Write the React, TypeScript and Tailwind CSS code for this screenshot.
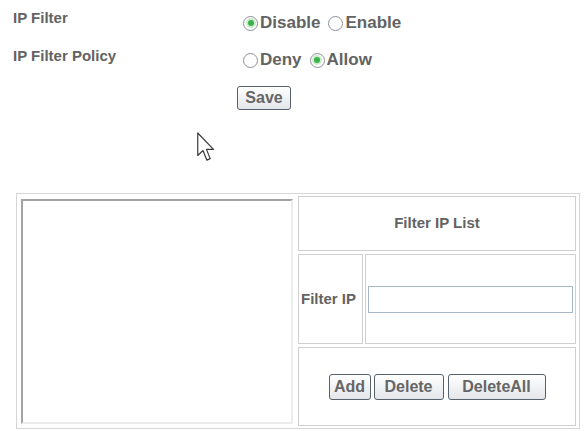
import React from 'react';

function Radio({ checked, label }: { checked?: boolean; label: string }) {
  return (
    <span className="flex items-center">
      <span className="shrink-0 w-[15px] h-[15px] rounded-full border-[1.5px] border-[#8b9097] bg-white flex items-center justify-center">
        {checked && <span className="w-[6px] h-[6px] rounded-full bg-[#3cb34a] ring-2 ring-[#cdeccd]" />}
      </span>
      <span className="ml-[2px] text-[17px] leading-[18px]">{label}</span>
    </span>
  );
}

function Btn({ label, w }: { label: string; w: string }) {
  return (
    <button
      className={`${w} h-[26px] border-[1.5px] border-[#56616c] rounded-[3px] bg-linear-to-b from-white to-[#e4e6ea] text-[16px] font-bold text-[#666] leading-none`}
    >
      {label}
    </button>
  );
}

export default function App() {
  return (
    <div className="relative w-[584px] h-[431px] bg-white font-['Liberation_Sans',Arial,sans-serif] font-bold text-[#636363] overflow-hidden">
      <div className="pl-[13px] pt-[10px]">
        <div className="flex h-[38px] items-start">
          <div className="w-[230px] text-[15px] leading-[16px]">IP Filter</div>
          <div className="flex gap-[8px] mt-[4px]">
            <Radio checked label="Disable" />
            <Radio label="Enable" />
          </div>
        </div>
        <div className="flex h-[30px] items-start">
          <div className="w-[230px] text-[15px] leading-[16px]">IP Filter Policy</div>
          <div className="flex gap-[8px] mt-[3px]">
            <Radio label="Deny" />
            <Radio checked label="Allow" />
          </div>
        </div>
        <div className="ml-[224px] mt-[8px]">
          <button className="w-[54px] h-[24px] border-[1.5px] border-[#56616c] rounded-[3px] bg-linear-to-b from-white to-[#e4e6ea] text-[16px] font-bold text-[#666] leading-none">
            Save
          </button>
        </div>
      </div>

      <div className="ml-[16px] mt-[83px] w-[564px] h-[236px] border border-[#d6d6d6] p-[2px] flex gap-[2px]">
        <div className="w-[277px] pl-[2px] pt-[3px]">
          <textarea className="w-[272px] h-[225px] resize-none border-2 border-t-[#a3a3a3] border-l-[#a3a3a3] border-r-[#ececec] border-b-[#ececec] bg-white outline-none" />
        </div>
        <div className="w-[278px] flex flex-col gap-[3px]">
          <div className="h-[55px] border border-[#d0d0d0] flex items-center justify-center text-[15px]">
            Filter IP List
          </div>
          <div className="h-[90px] flex gap-[2px]">
            <div className="w-[65px] border border-[#d0d0d0] flex items-center pl-[2px] text-[15px] whitespace-nowrap">
              Filter IP
            </div>
            <div className="flex-1 border border-[#d0d0d0] flex items-center px-[2px]">
              <input className="w-full h-[27px] border border-[#a7b6c6] bg-white outline-none" />
            </div>
          </div>
          <div className="h-[79px] border border-[#d0d0d0] flex items-center justify-center gap-[3px]">
            <Btn label="Add" w="w-[42px]" />
            <Btn label="Delete" w="w-[70px]" />
            <div className="ml-[1px]">
              <Btn label="DeleteAll" w="w-[98px]" />
            </div>
          </div>
        </div>
      </div>

      <svg className="absolute left-[197px] top-[132px]" width="18" height="32" viewBox="0 0 12 21">
        <path d="M0.5 0.5 L0.5 15.5 L4 12.2 L6.6 18.6 L8.8 17.6 L6.3 11.4 L11 11.4 Z" fill="white" stroke="#3a3a3a" strokeWidth="0.8" strokeLinejoin="round" />
      </svg>
    </div>
  );
}
